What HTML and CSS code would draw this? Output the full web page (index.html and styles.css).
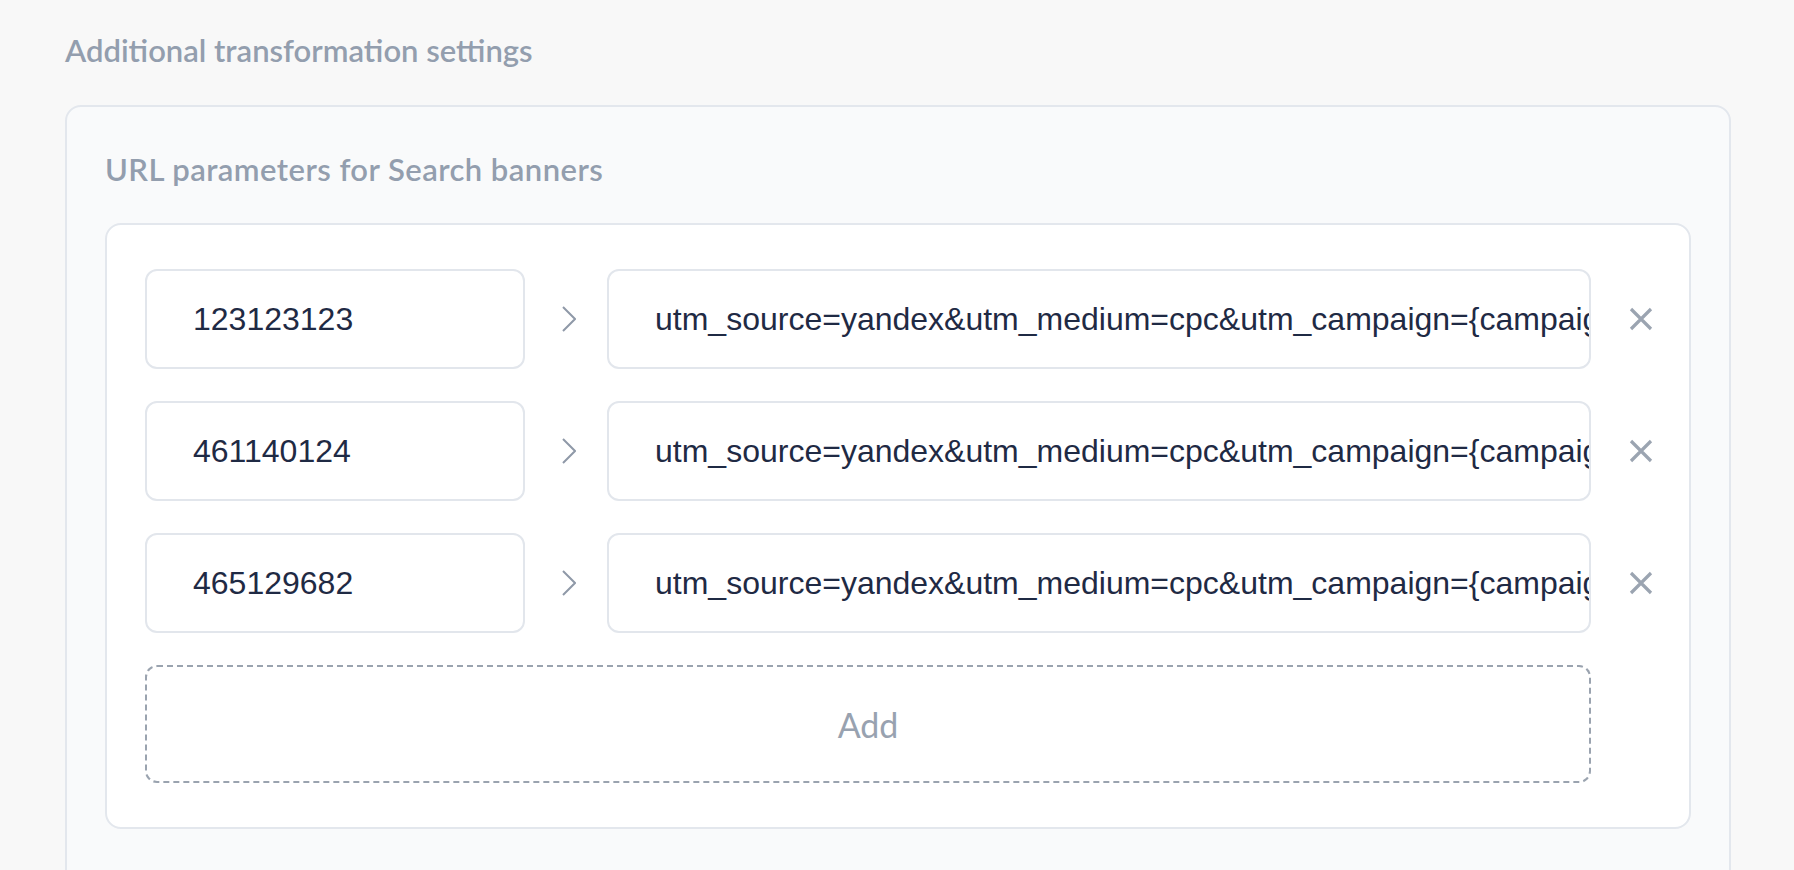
FILE: index.html
```html
<!DOCTYPE html>
<html lang="en">
<head>
<meta charset="utf-8">
<title>Additional transformation settings</title>
<link rel="stylesheet" href="styles.css">
</head>
<body>
<main class="page">
  <h2 class="section-title">Additional transformation settings</h2>
  <section class="outer-panel">
    <h3 class="panel-title">URL parameters for Search banners</h3>
    <div class="inner-panel">
      <div class="rows">
        <div class="field field-id">123123123</div>
        <div class="arrow"><svg width="14" height="26" viewBox="0 0 14 26"><path d="M1 1 L13 13 L1 25" fill="none" stroke="#8f99a8" stroke-width="2"/></svg></div>
        <div class="field field-params">utm_source=yandex&amp;utm_medium=cpc&amp;utm_campaign={campaign_id}&amp;utm_content={ad_id}&amp;utm_term={keyword}</div>
        <div class="remove"><svg width="24" height="24" viewBox="0 0 24 24"><path d="M2 2 L22 22 M22 2 L2 22" fill="none" stroke="#9ba4b1" stroke-width="3.2"/></svg></div>

        <div class="field field-id">461140124</div>
        <div class="arrow"><svg width="14" height="26" viewBox="0 0 14 26"><path d="M1 1 L13 13 L1 25" fill="none" stroke="#8f99a8" stroke-width="2"/></svg></div>
        <div class="field field-params">utm_source=yandex&amp;utm_medium=cpc&amp;utm_campaign={campaign_id}&amp;utm_content={ad_id}&amp;utm_term={keyword}</div>
        <div class="remove"><svg width="24" height="24" viewBox="0 0 24 24"><path d="M2 2 L22 22 M22 2 L2 22" fill="none" stroke="#9ba4b1" stroke-width="3.2"/></svg></div>

        <div class="field field-id">465129682</div>
        <div class="arrow"><svg width="14" height="26" viewBox="0 0 14 26"><path d="M1 1 L13 13 L1 25" fill="none" stroke="#8f99a8" stroke-width="2"/></svg></div>
        <div class="field field-params">utm_source=yandex&amp;utm_medium=cpc&amp;utm_campaign={campaign_id}&amp;utm_content={ad_id}&amp;utm_term={keyword}</div>
        <div class="remove"><svg width="24" height="24" viewBox="0 0 24 24"><path d="M2 2 L22 22 M22 2 L2 22" fill="none" stroke="#9ba4b1" stroke-width="3.2"/></svg></div>

        <button class="add-btn" type="button">Add</button>
      </div>
    </div>
  </section>
</main>
</body>
</html>
```

FILE: styles.css
```css
html, body {
  margin: 0;
  padding: 0;
  background: #f8f8f8;
}

.page {
  padding: 30px 0 0 65px;
  width: 1666px;
}

.section-title {
  margin: 0;
  font-family: "Lato", "Liberation Sans", sans-serif;
  font-weight: 600;
  font-size: 31px;
  line-height: 40px;
  color: #939eae;
}

.outer-panel {
  margin-top: 35px;
  box-sizing: border-box;
  width: 1666px;
  background: #f9fafb;
  border: 2px solid #e3e7ed;
  border-radius: 16px;
  padding: 42px 38px 60px 38px;
}

.panel-title {
  margin: 0 0 34px 0;
  font-family: "Lato", "Liberation Sans", sans-serif;
  font-weight: 600;
  font-size: 31px;
  letter-spacing: 0.45px;
  line-height: 40px;
  color: #939eae;
}

.inner-panel {
  background: #ffffff;
  border: 2px solid #e3e7ed;
  border-radius: 16px;
  padding: 44px 36px 44px 38px;
}

.rows {
  display: grid;
  grid-template-columns: 380px 82px 1fr 62px;
  grid-template-rows: repeat(3, 100px) 118px;
  row-gap: 32px;
}

.field {
  box-sizing: border-box;
  display: flex;
  align-items: center;
  background: #ffffff;
  border: 2px solid #e2e6ec;
  border-radius: 12px;
  padding-left: 46px;
  font-family: "Liberation Sans", Arial, sans-serif;
  font-size: 32px;
  color: #1f2a44;
  white-space: nowrap;
  overflow: hidden;
}

.arrow {
  display: flex;
  align-items: center;
  justify-content: center;
  padding-left: 6px;
}

.arrow svg, .remove svg {
  display: block;
}

.remove {
  display: flex;
  align-items: center;
  justify-content: flex-end;
}

.add-btn {
  grid-column: 1 / 4;
  height: 118px;
  box-sizing: border-box;
  display: flex;
  align-items: center;
  justify-content: center;
  background: #ffffff;
  border: 2px dashed #9aa3af;
  border-radius: 12px;
  font-family: "Lato", "Liberation Sans", sans-serif;
  font-size: 34px;
  font-weight: 400;
  color: #98a2b0;
  padding: 0;
  cursor: pointer;
}
```
